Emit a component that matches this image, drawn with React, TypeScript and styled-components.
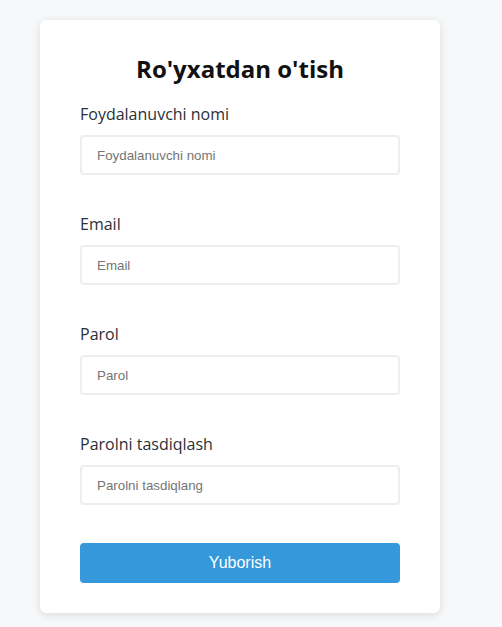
import React from "react";
import styled, { createGlobalStyle } from "styled-components";

const Global = createGlobalStyle`
  html, body { margin: 0; padding: 0; background: #f7f8fa; }
  body { font-family: "Open Sans", sans-serif; }
  * { box-sizing: border-box; }
`;

const Page = styled.div`
  display: flex;
  justify-content: flex-start;
  align-items: flex-start;
  padding: 20px 0 0 40px;
  min-height: 627px;
`;

const Card = styled.form`
  width: 400px;
  background: #fff;
  border-radius: 6px;
  box-shadow: 0 2px 10px rgba(0, 0, 0, 0.12);
  padding: 32px 40px 30px;
  display: flex;
  flex-direction: column;
`;

const Title = styled.h2`
  margin: 0 0 18px;
  text-align: center;
  font-family: "Open Sans", sans-serif;
  font-weight: 700;
  font-size: 24px;
  line-height: 33px;
  color: #111;
`;

const Group = styled.div`
  display: flex;
  flex-direction: column;
  margin-bottom: 38px;
`;

const Label = styled.label`
  font-family: "Open Sans", sans-serif;
  font-size: 16px;
  line-height: 22px;
  color: #2b2f36;
  margin-bottom: 10px;
`;

const Input = styled.input`
  height: 40px;
  width: 100%;
  border: 2px solid #eeeeee;
  border-radius: 4px;
  padding: 0 15px;
  font-family: "Liberation Sans", Arial, sans-serif;
  font-size: 13.33px;
  color: #333;
  outline: none;
  &::placeholder { color: #757575; }
`;

const Button = styled.button`
  height: 40px;
  width: 100%;
  border: none;
  border-radius: 4px;
  background: #3498db;
  color: #fff;
  font-family: "Liberation Sans", Arial, sans-serif;
  font-size: 16px;
  cursor: pointer;
`;

const fields = [
  { label: "Foydalanuvchi nomi", placeholder: "Foydalanuvchi nomi", type: "text" },
  { label: "Email", placeholder: "Email", type: "email" },
  { label: "Parol", placeholder: "Parol", type: "password" },
  { label: "Parolni tasdiqlash", placeholder: "Parolni tasdiqlang", type: "password" },
];

export default function App() {
  return (
    <>
      <Global />
      <Page>
        <Card onSubmit={(e) => e.preventDefault()}>
          <Title>Ro'yxatdan o'tish</Title>
          {fields.map((f) => (
            <Group key={f.label}>
              <Label>{f.label}</Label>
              <Input type={f.type} placeholder={f.placeholder} />
            </Group>
          ))}
          <Button type="submit">Yuborish</Button>
        </Card>
      </Page>
    </>
  );
}
